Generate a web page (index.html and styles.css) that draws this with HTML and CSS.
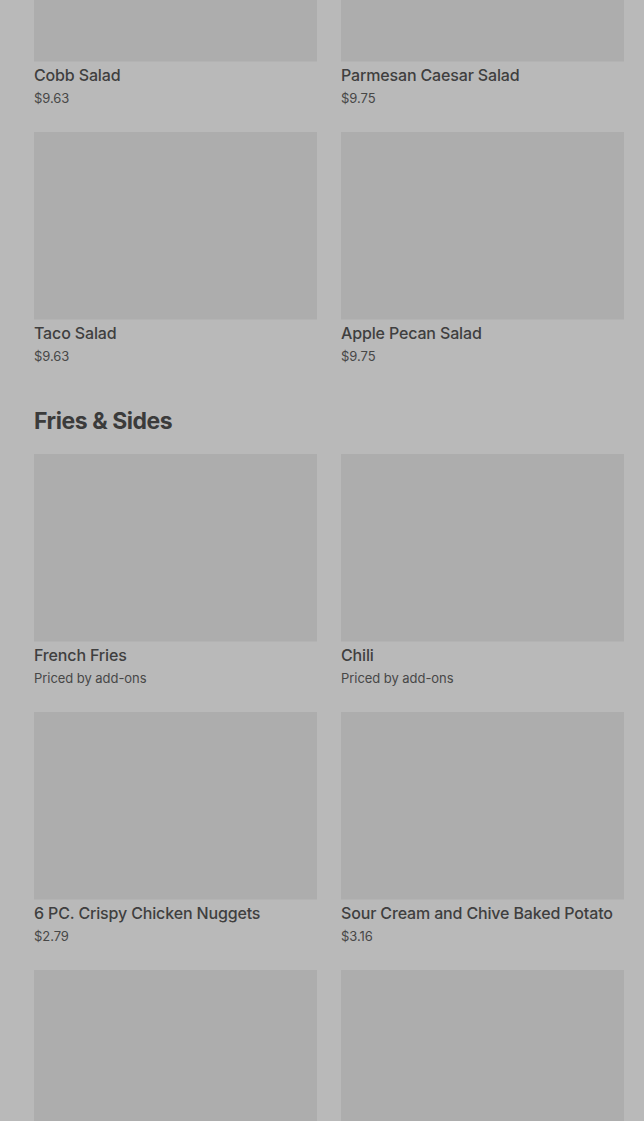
FILE: index.html
```html
<!DOCTYPE html>
<html>
<head>
<meta charset="utf-8">
<link rel="stylesheet" href="styles.css">
</head>
<body>
<main class="menu">
  <section class="grid first">
    <div class="card"><div class="img"></div><div class="title">Cobb Salad</div><div class="price">$9.63</div></div>
    <div class="card"><div class="img"></div><div class="title">Parmesan Caesar Salad</div><div class="price">$9.75</div></div>
    <div class="card"><div class="img"></div><div class="title">Taco Salad</div><div class="price">$9.63</div></div>
    <div class="card"><div class="img"></div><div class="title">Apple Pecan Salad</div><div class="price">$9.75</div></div>
  </section>
  <h2 class="heading">Fries &amp; Sides</h2>
  <section class="grid">
    <div class="card"><div class="img"></div><div class="title">French Fries</div><div class="price">Priced by add-ons</div></div>
    <div class="card"><div class="img"></div><div class="title">Chili</div><div class="price">Priced by add-ons</div></div>
    <div class="card"><div class="img"></div><div class="title">6 PC. Crispy Chicken Nuggets</div><div class="price">$2.79</div></div>
    <div class="card"><div class="img"></div><div class="title">Sour Cream and Chive Baked Potato</div><div class="price">$3.16</div></div>
    <div class="card"><div class="img"></div><div class="title">&nbsp;</div><div class="price">&nbsp;</div></div>
    <div class="card"><div class="img"></div><div class="title">&nbsp;</div><div class="price">&nbsp;</div></div>
  </section>
</main>
</body>
</html>
```

FILE: styles.css
```css
html, body {
  margin: 0;
  padding: 0;
  background: #b9b9b9;
  overflow: hidden;
}
body {
  font-family: Inter, Roboto, "Liberation Sans", sans-serif;
  color: #3e3e3e;
}
.menu {
  padding: 0 20px 0 34px;
}
.grid {
  display: grid;
  grid-template-columns: 283px 283px;
  column-gap: 24px;
  row-gap: 24px;
}
.grid.first {
  margin-top: -126px;
}
.img {
  height: 188px;
  background: #adadad;
  border-bottom: 1px solid #b3b3b3;
  box-sizing: border-box;
}
.title {
  margin-top: 1px;
  font-size: 16px;
  line-height: 24px;
  font-weight: 500;
  color: #3f3f3f;
  white-space: nowrap;
  letter-spacing: -0.15px;
}
.price {
  margin-top: 1px;
  font-size: 13px;
  line-height: 20px;
  color: #474747;
  letter-spacing: -0.05px;
}
.heading {
  margin: 39px 0 17px;
  font-size: 23px;
  line-height: 32px;
  font-weight: 700;
  letter-spacing: -0.45px;
  color: #3b3b3b;
}
```
